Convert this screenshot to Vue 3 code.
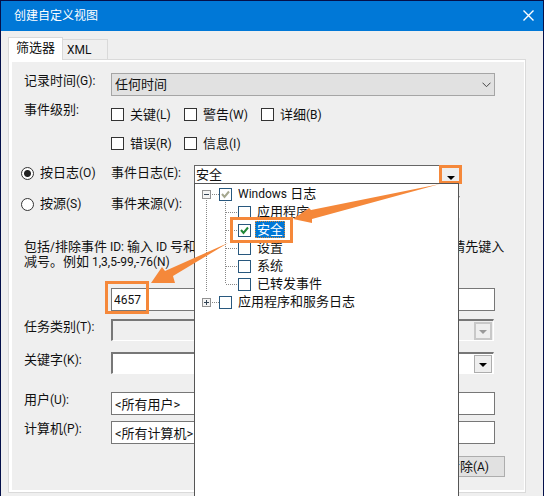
<script setup>
import { ref } from 'vue'

const levels = ref([
  { text: '关键', key: '(L)' },
  { text: '警告', key: '(W)' },
  { text: '详细', key: '(B)' },
  { text: '错误', key: '(R)' },
  { text: '信息', key: '(I)' }
])
const source = ref('log')
const eventIds = ref('4657')
const user = ref('<所有用户>')
const computer = ref('<所有计算机>')
const children = ref([
  { name: '应用程序', checked: false },
  { name: '安全', checked: true },
  { name: '设置', checked: false },
  { name: '系统', checked: false },
  { name: '已转发事件', checked: false }
])
</script>

<template>
  <div class="window">
    <header class="titlebar">
      <h1>创建自定义视图</h1>
      <button class="close" type="button" aria-label="关闭">
        <svg width="11" height="11" viewBox="0 0 11 11"><path d="M.5 .5 10.5 10.5M10.5 .5 .5 10.5" /></svg>
      </button>
    </header>

    <nav class="tabs">
      <button class="tab active" type="button">筛选器</button>
      <button class="tab" type="button">XML</button>
    </nav>

    <main class="panel">
      <div class="row time">
        <label for="time">记录时间<small>(G):</small></label>
        <div class="select-wrap">
          <select id="time"><option>任何时间</option></select>
          <svg class="chevron" width="9" height="6" viewBox="0 0 9 6"><path d="M.5 .7 4.5 4.7 8.5 .7" /></svg>
        </div>
      </div>

      <div class="row level">
        <span class="label">事件级别<small>:</small></span>
        <div class="levels">
          <label v-for="l in levels" :key="l.key" class="option">
            <input type="checkbox" />
            <span>{{ l.text }}<small>{{ l.key }}</small></span>
          </label>
        </div>
      </div>

      <div class="row by-log">
        <label class="option"><input v-model="source" type="radio" value="log" /><span>按日志<small>(O)</small></span></label>
        <div class="sub">
          <label for="log">事件日志<small>(E):</small></label>
          <div class="combo">
            <input id="log" type="text" value="安全" />
            <button class="drop marked" type="button" aria-label="展开"><i class="tri"></i></button>
            <div class="popup">
              <ul class="tree">
                <li>
                  <div class="node">
                    <span class="toggle"></span><span class="dash"></span>
                    <label><input class="partial" type="checkbox" checked /><span class="name"><small>Windows</small> 日志</span></label>
                  </div>
                  <ul class="branch">
                    <li v-for="c in children" :key="c.name" class="node">
                      <span class="dash long"></span>
                      <label><input v-model="c.checked" type="checkbox" /><span class="name" :class="{ selected: c.checked }">{{ c.name }}</span></label>
                    </li>
                  </ul>
                </li>
                <li>
                  <div class="node">
                    <span class="toggle plus"></span><span class="dash"></span>
                    <label><input type="checkbox" /><span class="name">应用程序和服务日志</span></label>
                  </div>
                </li>
              </ul>
            </div>
          </div>
        </div>
      </div>

      <div class="row by-source">
        <label class="option"><input v-model="source" type="radio" value="source" /><span>按源<small>(S)</small></span></label>
        <div class="sub">
          <label for="source">事件来源<small>(V):</small></label>
          <div class="sunken"><input id="source" type="text" /></div>
        </div>
      </div>

      <p class="hint">
        包括<small>/</small>排除事件<small> ID: </small>输入<small> ID </small>号和<small>/</small>或<small> ID </small>范围，使用逗号分隔。若要排除条件，请先键入<br />减号。例如<small> 1,3,5-99,-76(N)</small>
      </p>

      <div class="row ids">
        <span></span>
        <input v-model="eventIds" class="box number" type="text" aria-label="事件 ID" />
      </div>
      <div class="row task">
        <label for="task">任务类别<small>(T):</small></label>
        <div class="sunken disabled"><input id="task" type="text" disabled /><button class="arrow" type="button" disabled aria-label="展开"><i class="tri"></i></button></div>
      </div>
      <div class="row keyword">
        <label for="keyword">关键字<small>(K):</small></label>
        <div class="sunken"><input id="keyword" type="text" /><button class="arrow" type="button" aria-label="展开"><i class="tri"></i></button></div>
      </div>
      <div class="row user">
        <label for="user">用户<small>(U):</small></label>
        <input id="user" v-model="user" class="box" type="text" />
      </div>
      <div class="row computer">
        <label for="computer">计算机<small>(P):</small></label>
        <input id="computer" v-model="computer" class="box" type="text" />
      </div>
      <div class="actions">
        <button class="clear" type="button">清除<small>(A)</small></button>
      </div>
    </main>

    <svg class="notes" width="544" height="496" viewBox="0 0 544 496" aria-hidden="true">
      <rect x="231.5" y="218.5" width="60" height="23" />
      <rect x="106.5" y="282.5" width="41" height="30" />
      <path d="M440 184 L311 210 L309 208 L293 219 L312 223 L312 219 Z" />
      <path d="M228 243 L165 271 L162 267 L151 283 L175 283 L173 276 Z" />
    </svg>
  </div>
</template>

<style>
body {
  margin: 0;
  background: #efefef;
}
</style>

<style scoped>
* {
  box-sizing: border-box;
}
.window {
  position: relative;
  display: flex;
  flex-direction: column;
  min-height: 100vh;
  overflow: hidden;
  background: #efefef;
  border: solid #04104a;
  border-width: 1px 1px 0 1px;
  color: #111;
  font: 13px/16px Roboto, "Noto Sans CJK SC", sans-serif;
}
button,
input,
select {
  margin: 0;
  font: inherit;
  color: inherit;
}
small {
  font-size: 12px;
  line-height: 12px;
  white-space: pre;
}
.titlebar {
  display: flex;
  align-items: center;
  justify-content: space-between;
  height: 30px;
  padding: 0 9px 1px 13px;
  background: #0078d7;
  color: #fff;
}
.titlebar h1 {
  margin: 0;
  font-size: 12px;
  font-weight: 400;
}
.close {
  display: flex;
  padding: 0;
  border: 0;
  background: none;
}
.close path {
  fill: none;
  stroke: #fff;
  stroke-width: 1.4;
}
.tabs {
  display: flex;
  align-items: flex-end;
  height: 28px;
  padding-left: 7px;
}
.tab {
  height: 20px;
  width: 45px;
  padding: 0 0 0 4px;
  border: 1px solid #d9d9d9;
  border-width: 1px 1px 0 0;
  background: #efefef;
  font-size: 12px;
  text-align: left;
}
.tab.active {
  position: relative;
  width: 55px;
  height: 23px;
  margin-bottom: -1px;
  padding: 0 0 2px 7px;
  border-width: 1px 1px 0 1px;
  background: #fff;
  font-size: 13px;
}
.panel {
  margin: 0 17px 1px 7px;
  padding: 11px 30px 15px 12px;
  border: 1px solid #dadada;
  box-shadow: inset 3px 2px #fff, inset -1px -2px #fff;
}
.row {
  display: grid;
  grid-template-columns: 90px 1fr;
  align-items: start;
}
.row > label:not(.option),
.label {
  padding-left: 3px;
}
.option {
  display: flex;
  align-items: center;
  gap: 6px;
  white-space: nowrap;
}
input[type="checkbox"],
input[type="radio"] {
  appearance: none;
  flex: none;
  width: 13px;
  height: 13px;
  border: 1px solid #333;
  background: #fff;
}
input[type="radio"] {
  border-radius: 50%;
}
input[type="radio"]:checked {
  background: radial-gradient(circle, #222 3px, #fff 4px);
}
.time {
  padding-top: 2px;
}
.select-wrap {
  display: grid;
  align-items: center;
}
.select-wrap > * {
  grid-area: 1 / 1;
}
.select-wrap select {
  appearance: none;
  width: 100%;
  height: 23px;
  padding: 0 3px;
  border: 1px solid #a5a5a5;
  border-radius: 0;
  background: #e1e1e1;
}
.chevron {
  justify-self: end;
  margin-right: 4px;
  fill: none;
  stroke: #444;
}
.level {
  margin-top: 6px;
}
.levels {
  display: grid;
  grid-template-columns: 73px 77px 1fr;
  grid-auto-rows: 25px;
  row-gap: 4px;
}
.by-log {
  margin-top: 9px;
}
.sub {
  display: grid;
  grid-template-columns: 83px 267px;
  align-items: start;
}
.combo {
  position: relative;
  display: flex;
  width: 268px;
  height: 19px;
  border: 1px solid #666;
  background: #fff;
}
.combo > input {
  flex: 1;
  min-width: 0;
  padding: 0 1px;
  border: 0;
  background: none;
}
.drop {
  display: flex;
  align-items: flex-end;
  justify-content: center;
  width: 23px;
  height: 19px;
  margin: -1px;
  padding: 0 0 1px;
  border: 3px solid #f5883a;
  background: #eee;
}
.tri {
  border: 4px solid transparent;
  border-top-color: #000;
  border-bottom: 0;
}
.popup {
  position: absolute;
  z-index: 1;
  top: 17px;
  left: -1px;
  width: 265px;
  height: 100vh;
  border: 1px solid #555;
  background: #fff;
}
.tree,
.tree ul {
  margin: 0;
  padding: 0;
  list-style: none;
}
.tree {
  padding-left: 7px;
}
.tree > li:first-child {
  background: repeating-linear-gradient(#888 0 1px, transparent 1px 2px) 4px 14px / 1px 100% no-repeat;
}
.node,
.node label {
  display: flex;
  align-items: center;
  height: 18px;
}
.node input[type="checkbox"] {
  margin-top: 2px;
  border-color: #28587e;
}
.node input:checked {
  background: #fff url("data:image/svg+xml,%3Csvg xmlns='http://www.w3.org/2000/svg' viewBox='0 0 11 11'%3E%3Cpath d='M2 5 4.5 8 9 2.5' fill='none' stroke='%23218838' stroke-width='2'/%3E%3C/svg%3E");
}
.node input.partial:checked {
  background-image: url("data:image/svg+xml,%3Csvg xmlns='http://www.w3.org/2000/svg' viewBox='0 0 11 11'%3E%3Cpath d='M2 5 4.5 8 9 2.5' fill='none' stroke='%23a5a78e' stroke-width='2'/%3E%3C/svg%3E");
}
.toggle {
  width: 9px;
  height: 9px;
  margin-top: 2px;
  border: 1px solid #919191;
  background: linear-gradient(#345, #345) center / 5px 1px no-repeat, #f4f4f4;
}
.toggle.plus {
  background: linear-gradient(#345, #345) center / 5px 1px no-repeat, linear-gradient(#345, #345) center / 1px 5px no-repeat, #f4f4f4;
}
.dash {
  width: 8px;
  height: 1px;
  margin-top: 2px;
  background: repeating-linear-gradient(90deg, transparent 0 1px, #888 1px 2px);
}
.dash.long {
  width: 13px;
}
.branch {
  background: repeating-linear-gradient(#888 0 1px, transparent 1px 2px) 0 0 / 1px 82px no-repeat;
}
.tree .branch {
  margin-left: 23px;
}
.name {
  margin-left: 4px;
  padding: 0 2px;
  line-height: 17px;
  white-space: nowrap;
}
.name.selected {
  outline: 1px dotted #d98a3a;
  outline-offset: -1px;
  background: #0078d7;
  color: #fff;
}
.by-source {
  margin-top: 12px;
}
.sunken {
  display: flex;
  align-items: center;
  height: 22px;
  margin-right: 1px;
  padding-right: 1px;
  border: solid;
  border-width: 2px 1px 1px 2px;
  border-color: #777 #fff #fff #777;
  background: #fff;
}
.sunken input {
  flex: 1;
  min-width: 0;
  height: 100%;
  padding: 0 3px;
  border: 0;
  background: none;
}
.sunken.disabled {
  background: #efefef;
}
.arrow {
  display: flex;
  align-items: center;
  justify-content: center;
  width: 18px;
  height: 18px;
  padding: 2px 0 0;
  border: 1px solid #adadad;
  background: #eee;
}
.arrow:disabled {
  border: 2px solid #c8c8c8;
}
.arrow:disabled .tri {
  border-top-color: #999;
}
.hint {
  margin: 21px 0 0 3px;
  line-height: 15px;
  white-space: nowrap;
}
.box {
  width: 100%;
  height: 23px;
  padding: 0 3px;
  border: 1px solid #777;
  background: #fff;
}
.box.number {
  padding: 0 2px;
  font-size: 12px;
}
.ids {
  margin-top: 19px;
}
.task {
  margin-top: 8px;
}
.keyword {
  margin-top: 11px;
}
.user {
  margin-top: 18px;
}
.computer {
  margin-top: 6px;
}
.actions {
  display: flex;
  justify-content: flex-end;
  margin: 12px -10px 0 0;
}
.clear {
  width: 74px;
  height: 21px;
  padding: 0;
  border: 1px solid #adadad;
  background: #e1e1e1;
}
.notes {
  position: absolute;
  z-index: 2;
  top: -1px;
  left: -1px;
  pointer-events: none;
}
.notes rect {
  fill: none;
  stroke: #f5883a;
  stroke-width: 3;
}
.notes path {
  fill: #f5883a;
}
</style>
